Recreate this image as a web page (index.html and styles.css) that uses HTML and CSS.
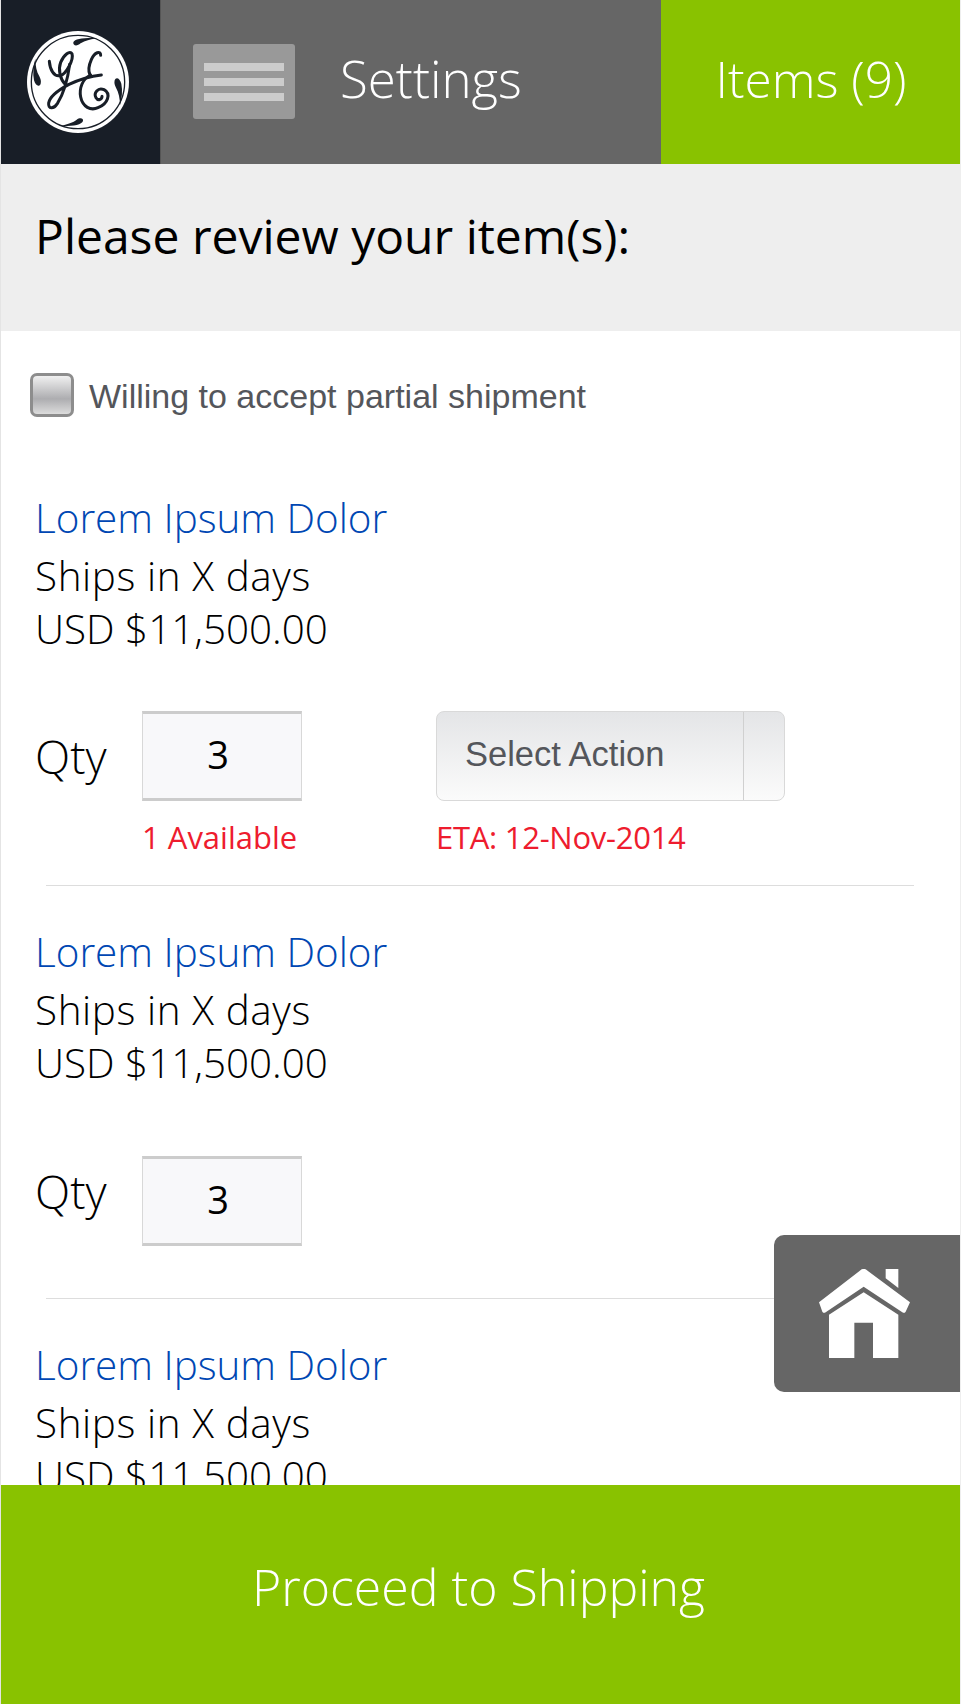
FILE: index.html
```html
<!DOCTYPE html>
<html lang="en">
<head>
<meta charset="utf-8">
<title>Review items</title>
<link rel="stylesheet" href="styles.css">
</head>
<body>
<div class="screen">
  <header class="topbar">
    <div class="logo-cell">
      <svg class="logo" viewBox="79 92 306 306" aria-label="GE">
        <circle cx="232" cy="245" r="153" fill="#fff"/>
        <circle cx="232" cy="245" r="140" fill="none" stroke="#181e27" stroke-width="4"/>
        <path class="swoosh" d="M218 126C222 114 250 112 290 113C265 118 245 124 236 132C228 138 216 136 218 126Z"/>
        <path class="swoosh" d="M342 240C346 228 358 234 362 250C366 270 364 295 358 315C358 295 354 275 346 262C342 254 340 248 342 240Z"/>
        <path class="swoosh" d="M247 362C243 374 215 378 178 377C200 372 218 366 228 358C236 352 249 352 247 362Z"/>
        <path class="swoosh" d="M120 250C116 262 104 256 100 240C96 220 98 195 104 175C104 195 108 215 116 228C120 236 122 242 120 250Z"/>
        <path class="script" d="M146 183C148 208 160 230 178 226C196 222 220 178 214 160C208 150 190 162 180 186C172 208 178 236 194 252"/>
        <path class="script" d="M207 192C202 230 192 275 170 310C158 328 142 326 144 308C147 288 175 268 205 252C235 238 268 228 302 224"/>
        <path class="script" d="M300 165C300 150 282 155 272 178C264 196 262 212 268 224"/>
        <path class="script" d="M270 224C245 235 235 265 240 290C246 320 270 332 292 322C322 310 332 280 310 268C292 260 278 278 286 292C292 302 304 298 304 288"/>
      </svg>
    </div>
    <div class="settings-cell">
      <div class="menu-icon"><span></span><span></span><span></span></div>
      <span class="settings-label">Settings</span>
    </div>
    <div class="items-cell"><span class="items-label">Items (9)</span></div>
  </header>

  <div class="review-band">
    <h1>Please review your item(s):</h1>
  </div>

  <main class="content">
    <label class="partial">
      <span class="checkbox"></span>
      <span class="partial-text">Willing to accept partial shipment</span>
    </label>

    <section class="item item-first">
      <a class="item-title">Lorem Ipsum Dolor</a>
      <p class="item-line item-ships">Ships in X days</p>
      <p class="item-line">USD $11,500.00</p>
      <div class="qty-row">
        <div class="qty-group">
          <span class="qty-label">Qty</span>
          <div class="qty-box">3</div>
        </div>
        <div class="action-box">
          <span class="action-text">Select Action</span>
          <span class="action-arrow"></span>
        </div>
      </div>
      <div class="notes">
        <span class="note note-avail">1 Available</span>
        <span class="note note-eta">ETA: 12-Nov-2014</span>
      </div>
    </section>

    <section class="item item-second">
      <a class="item-title">Lorem Ipsum Dolor</a>
      <p class="item-line item-ships">Ships in X days</p>
      <p class="item-line">USD $11,500.00</p>
      <div class="qty-row qty-row-loose">
        <div class="qty-group">
          <span class="qty-label qty-label-raised">Qty</span>
          <div class="qty-box">3</div>
        </div>
      </div>
    </section>

    <section class="item item-last">
      <a class="item-title">Lorem Ipsum Dolor</a>
      <p class="item-line item-ships">Ships in X days</p>
      <p class="item-line">USD $11,500.00</p>
    </section>
  </main>

  <div class="home-button">
    <svg class="home-icon" viewBox="232 175 273 267" aria-label="Home">
      <path d="M432 175H470V232L432 203Z"/>
      <path d="M360 176Q366 173 372 176L505 275L492 303Q488 309 482 305L366 228L252 305Q246 309 242 303L232 275Z"/>
      <path d="M366 245L470 312V442H394V336H338V442H262V312Z"/>
    </svg>
  </div>

  <footer class="proceed">Proceed to Shipping</footer>
</div>
</body>
</html>
```

FILE: styles.css
```css
* { box-sizing: border-box; }
html, body { margin: 0; padding: 0; background: #fff; }
.screen {
  position: relative;
  width: 961px;
  height: 1704px;
  overflow: hidden;
  display: flex;
  flex-direction: column;
  font-family: "Open Sans", "Liberation Sans", sans-serif;
  border-left: 1px solid #e4e4e4;
  border-right: 1px solid #eee;
}
.topbar { display: flex; height: 164px; flex: none; margin-left: -1px; margin-right: -1px; }
.logo-cell {
  width: 161px;
  background: #181e27;
  border-left: 1px solid #777;
  border-right: 1px solid #555;
  display: flex;
  align-items: center;
  justify-content: center;
}
.logo { width: 102px; height: 102px; margin-left: -5px; }
.swoosh { fill: #181e27; }
.script { fill: none; stroke: #181e27; stroke-width: 9; stroke-linecap: round; stroke-linejoin: round; }
.settings-cell {
  width: 500px;
  background: #666;
  display: flex;
  align-items: center;
  padding-left: 32px;
}
.menu-icon {
  width: 102px;
  height: 75px;
  margin-bottom: 1px;
  background: #999;
  border-radius: 3px;
  display: flex;
  flex-direction: column;
  justify-content: center;
  gap: 7px;
  padding: 0 11px;
}
.menu-icon span { height: 8px; background: #ccc; }
.settings-label { margin-left: 45px; margin-bottom: 7px; color: #fff; font-size: 51px; font-weight: 300; line-height: 1; }
.items-cell {
  flex: 1;
  background: #89c200;
  color: #fff;
  font-size: 49.5px;
  font-weight: 300;
  display: flex;
  align-items: center;
  justify-content: center;
}
.items-label { margin-bottom: 7px; }
.review-band { height: 167px; flex: none; background: #eee; padding: 0 35px; margin-left: -1px; margin-right: -1px; }
.review-band h1 { margin: 0; padding-top: 40px; font-size: 48px; line-height: 64px; font-weight: 500; color: #000; }
.content { flex: 1; min-height: 0; padding: 0 45px 0 34px; }
.partial {
  display: flex;
  align-items: flex-start;
  gap: 15px;
  margin: 42px 0 0 -5px;
  color: #54565b;
  font-family: "Liberation Sans", Arial, sans-serif;
  font-size: 34px;
  line-height: 44px;
}
.partial-text { padding-top: 1px; }
.checkbox {
  width: 44px;
  height: 44px;
  border: 3px solid #8d8d8d;
  border-radius: 7px;
  background: linear-gradient(#f0f0f0, #adadb0 60%, #dcdcdc);
}
.item { border-bottom: 1px solid #ddd; margin-left: 11px; margin-right: 1px; }
.item > * { margin-left: -11px; }
.item-first { margin-top: 73px; height: 395px; }
.item-second { height: 413px; padding-top: 39px; }
.item-last { border-bottom: 0; padding-top: 39px; }
.item-title { display: block; margin-bottom: 4px; color: #0047b3; font-size: 40.4px; line-height: 54px; font-weight: 300; }
.item-line { margin-top: 0; margin-bottom: 0; color: #000; font-size: 40.4px; line-height: 53px; font-weight: 300; }
.item-ships { letter-spacing: .6px; }
.qty-row { display: flex; margin-top: 56px; align-items: flex-start; }
.qty-row-loose { margin-top: 67px; }
.qty-group { display: flex; align-items: flex-start; width: 401px; }
.qty-label { width: 107px; font-size: 46px; line-height: 90px; font-weight: 300; color: #000; }
.qty-label-raised { line-height: 70px; }
.qty-box {
  width: 160px;
  height: 90px;
  background: #f8f8fa;
  border: 1px solid #d8d8d8;
  border-top: 3px solid #ccc;
  border-bottom: 3px solid #ccc;
  padding-right: 8px;
  text-align: center;
  font-size: 38px;
  line-height: 80px;
  color: #000;
}
.action-box {
  width: 349px;
  height: 90px;
  display: flex;
  border: 1px solid #d9d9d9;
  border-radius: 8px;
  background: linear-gradient(#e4e5e7, #fbfbfb);
  color: #54565b;
  font-family: "Liberation Sans", Arial, sans-serif;
  font-size: 34.5px;
  line-height: 84px;
}
.action-text { flex: 1; padding-left: 28px; border-right: 1px solid #d0d0d0; }
.action-arrow { width: 40px; }
.notes { display: flex; margin-top: 14px; color: #ee1c2e; font-size: 31px; line-height: 44px; }
.note { font-weight: 400; }
.note-avail { margin-left: 107px; width: 294px; }
.note-eta { letter-spacing: -.27px; }
.home-button {
  position: absolute;
  left: 773px;
  top: 1235px;
  width: 188px;
  height: 157px;
  background: #666;
  border-radius: 10px 0 0 10px;
  display: flex;
  align-items: center;
  justify-content: center;
}
.home-icon { width: 91px; height: 89px; fill: #fff; margin-right: 7px; }
.proceed {
  position: absolute;
  left: 0;
  right: 0;
  bottom: 0;
  height: 219px;
  padding-bottom: 16px;
  padding-right: 4px;
  background: #89c200;
  color: #fff;
  font-size: 50px;
  font-weight: 300;
  display: flex;
  align-items: center;
  justify-content: center;
}
```
